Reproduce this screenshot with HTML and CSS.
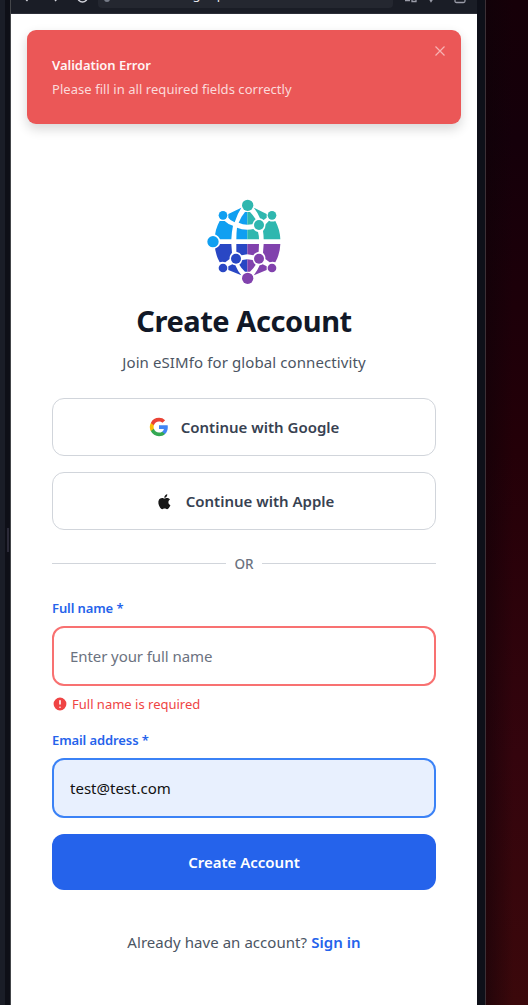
FILE: index.html
```html
<!DOCTYPE html>
<html lang="en">
<head>
<meta charset="utf-8">
<title>Create Account</title>
<link rel="stylesheet" href="styles.css">
</head>
<body>
<div class="desktop">
  <div class="rail"></div>
  <div class="gutter"><span class="grip"></span></div>
  <div class="browser">
    <header class="toolbar">
      <svg class="nav-icons" width="87" height="14" viewBox="0 0 87 14" fill="none" stroke="#d4d6dd" stroke-width="1.4"><path d="M16.500 1l-2-2M44 1l2-2"/><circle cx="71.500" cy="-3" r="5"/></svg>
      <div class="address"><svg width="12" height="8" viewBox="0 0 12 8"><circle cx="9" cy="-1" r="3" fill="#777c88"/></svg><span class="url">esimfo.com/signup</span></div>
      <svg class="tool-icons" width="84" height="14" viewBox="0 0 84 14" fill="none" stroke="#9a9ca8" stroke-width="1.300"><path d="M12 .5h5M19-2v3.500h4v-3.500M36-2l2 3.500 2-3M62-2v3q0 1.500 1.500 1.500h7Q72 2.500 72 1v-3"/></svg>
    </header>
    <main class="page">
      <section class="toast">
        <h2 class="toast-title">Validation Error</h2>
        <p class="toast-text">Please fill in all required fields correctly</p>
        <svg class="close" width="12" height="12" viewBox="0 0 12 12" fill="none" stroke="#f7b3b4" stroke-width="1.200"><path d="M1.500 1.500l9 9m0-9l-9 9"/></svg>
      </section>
      <div class="content">
        <svg class="logo" width="100" height="104" viewBox="0 0 300 312">
          <g fill="#109ff1">
            <path d="M68 93Q54 118 53 148H103Q104 125 108 107Q94 104 83 93Z"/>
            <path d="M94 72L133 53Q121 71 113 97Q100 92 94 83Z"/>
            <path d="M151 66H144Q132 80 125 98Q137 104 151 104Z"/>
            <path d="M120 113Q134 119 151 119V148H118Q118 129 120 113Z"/>
            <circle cx="78" cy="76" r="13"/>
          </g>
          <g fill="#2fb7af">
            <path d="M151 66H159Q169 76 176 88Q168 93 166 103L151 104Z"/>
            <path d="M151 119Q162 119 169 117Q175 124 183 126Q186 137 186 148H151Z"/>
            <path d="M170 53L209 72V83L200 90Q194 86 189 85Q181 66 170 53Z"/>
            <path d="M235 93Q249 119 250 148H200Q200 135 198 123Q206 116 206 103L216 92Q225 97 235 93Z"/>
            <circle cx="152" cy="46" r="17"/><circle cx="225" cy="76" r="13"/><circle cx="186" cy="105" r="15"/>
          </g>
          <g fill="#2947c4">
            <path d="M53 162H103L105 188Q96 198 98 207L85 217Q76 213 68 217Q54 192 53 162Z"/>
            <path d="M118 162H151V193L134 196Q129 187 118 185Z"/>
            <path d="M151 208V245H144Q133 235 127 224Q134 219 136 210Z"/>
            <path d="M94 229L106 223Q111 226 115 226Q122 243 133 256L94 240Z"/>
            <circle cx="78" cy="234" r="13"/><circle cx="117" cy="206" r="15"/>
          </g>
          <g fill="#8142ad">
            <path d="M250 162H200L198 188Q207 198 205 207L218 217Q227 213 235 217Q249 192 250 162Z"/>
            <path d="M186 162H151V193L169 196Q174 187 185 185Z"/>
            <path d="M151 208V245H159Q170 235 176 224Q169 219 167 210Z"/>
            <path d="M209 229L197 223Q192 226 188 226Q181 243 170 256L209 240Z"/>
            <circle cx="186" cy="206" r="15"/><circle cx="225" cy="234" r="13"/><circle cx="152" cy="265" r="17"/>
          </g>
          <circle cx="48" cy="155" r="19.500" fill="#109ff1" stroke="#fff" stroke-width="5"/>
        </svg>
        <h1 class="title"><span>Create Account</span></h1>
        <p class="subtitle">Join eSIMfo for global connectivity</p>
        <button class="social google"><svg width="20" height="20" viewBox="0 0 24 24"><path fill="#4285f4" d="M22.560 12.250c0-.78-.07-1.530-.2-2.250H12v4.260h5.920a5.060 5.060 0 0 1-2.200 3.320v2.770h3.570c2.080-1.920 3.270-4.740 3.270-8.100z"/><path fill="#34a853" d="M12 23c2.970 0 5.460-.98 7.280-2.660l-3.570-2.770c-.98.66-2.230 1.060-3.710 1.060-2.860 0-5.290-1.930-6.160-4.530H2.180v2.840A11 11 0 0 0 12 23z"/><path fill="#fbbc05" d="M5.840 14.090a6.600 6.600 0 0 1 0-4.180V7.070H2.180a11 11 0 0 0 0 9.860l3.660-2.840z"/><path fill="#ea4335" d="M12 5.380c1.620 0 3.060.56 4.210 1.640l3.150-3.150A10.560 10.560 0 0 0 12 1 11 11 0 0 0 2.180 7.070l3.660 2.840C6.710 7.310 9.140 5.380 12 5.380z"/></svg><span>Continue with Google</span></button>
        <button class="social apple"><svg width="20" height="20" viewBox="-2 -2.500 27 27"><path fill="#171717" d="M18.710 19.500c-.83 1.240-1.710 2.450-3.050 2.470-1.340.03-1.770-.79-3.290-.79-1.530 0-2 .77-3.270.82-1.310.05-2.300-1.320-3.140-2.530C4.250 17 2.940 12.450 4.700 9.390c.87-1.520 2.430-2.480 4.120-2.510 1.280-.02 2.500.87 3.290.87.78 0 2.260-1.070 3.810-.91.65.03 2.470.26 3.640 1.980-.09.06-2.170 1.280-2.150 3.810.03 3.020 2.650 4.030 2.680 4.040-.03.07-.42 1.440-1.380 2.830M13 3.500c.73-.83 1.940-1.460 2.940-1.500.13 1.170-.34 2.350-1.040 3.190-.69.85-1.830 1.510-2.950 1.420-.15-1.150.41-2.350 1.050-3.110z"/></svg><span>Continue with Apple</span></button>
        <div class="divider"><span>OR</span></div>
        <label class="label name-label" for="name">Full name *</label>
        <input class="field invalid" id="name" placeholder="Enter your full name">
        <p class="error"><svg width="16" height="16" viewBox="0 0 20 20" fill="#ef4444"><path fill-rule="evenodd" d="M18 10a8 8 0 1 1-16 0 8 8 0 0 1 16 0zm-7 4a1 1 0 1 1-2 0 1 1 0 0 1 2 0zm-1-9a1 1 0 0 0-1 1v4a1 1 0 1 0 2 0V6a1 1 0 0 0-1-1z"/></svg><span>Full name is required</span></p>
        <label class="label email-label" for="email">Email address *</label>
        <input class="field filled" id="email" value="test@test.com">
        <button class="submit"><span>Create Account</span></button>
        <p class="signin"><span class="question">Already have an account?</span><a class="link">Sign in</a></p>
      </div>
    </main>
  </div>
  <div class="edge"></div>
  <div class="wallpaper"></div>
</div>
</body>
</html>
```

FILE: styles.css
```css
* { box-sizing: border-box; }
body, h1, h2, p { margin: 0; }
body, button, input { font-family: "Noto Sans", "Open Sans", sans-serif; }
.desktop { display: flex; width: 528px; height: 1005px; overflow: hidden; background: #0e0f17; }
.rail { width: 5px; background: #1a1d27; }
.gutter { display: flex; align-items: center; width: 6px; padding: 75px 0 0 2px; border-right: 1px solid #44464a; }
.grip { width: 2px; height: 24px; background: #2b2a38; }
.browser { display: flex; flex-direction: column; width: 466px; }
.toolbar { display: flex; height: 14px; flex: none; overflow: hidden; background: #1a1d26; border-bottom: 1px solid #2c2e38; }
.nav-icons, .tool-icons { flex: none; }
.address { display: flex; flex: 1; height: 8px; overflow: hidden; background: #242730; border-radius: 0 0 4px 4px; }
.url { margin: -15px 0 0 -3px; color: #e5e6ea; font-size: 13px; line-height: 18px; }
.page { flex: 1; padding: 16px 16px 0; background: #fff; }
.toast { position: relative; height: 94px; padding: 25px; border-radius: 9px; background: #eb5757; box-shadow: 0 5px 12px rgba(0,0,0,.16); }
.toast-title { color: #fff5f5; font-size: 13px; font-weight: 600; line-height: 20px; letter-spacing: -.03px; }
.toast-text { margin-top: 4px; color: #fbdada; font-size: 13px; line-height: 20px; letter-spacing: .05px; white-space: nowrap; }
.close { position: absolute; top: 15px; right: 15px; }
.content { display: flex; flex-direction: column; width: 384px; margin: 66px 0 0 25px; }
.logo { margin-left: 145px; flex: none; }
.title { margin-top: 7px; color: #111827; font-size: 29px; font-weight: 700; line-height: 40px; letter-spacing: -.43px; text-align: center; }
.subtitle { margin-top: 9px; color: #4b5563; font-size: 15px; line-height: 24px; letter-spacing: .1px; text-align: center; white-space: nowrap; }
.social { display: flex; align-items: center; justify-content: center; gap: 12px; height: 58px; border: 1px solid #d1d5db; border-radius: 12px; background: #fff; color: #374151; font-size: 15px; font-weight: 600; }
.google { margin-top: 24px; }
.apple { margin-top: 16px; }
.divider { display: flex; align-items: center; gap: 8px; height: 20px; margin-top: 23px; color: #6b7280; font-size: 13.500px; font-weight: 500; }
.divider span { padding-top: 2px; }
.divider::before, .divider::after { content: ""; flex: 1; height: 1px; background: #d1d5db; }
.label { color: #2563eb; font-size: 13px; font-weight: 600; line-height: 20px; letter-spacing: -.1px; }
.name-label { margin-top: 25px; }
.field { width: 100%; height: 60px; margin: 8px 0 0; padding: 0 16px; border: 2px solid #f87171; border-radius: 12px; outline: 0; background: #fff; color: #111; font-size: 15px; }
.field::placeholder { color: #6b7280; letter-spacing: -.08px; opacity: 1; }
.filled { border-color: #3b82f6; background: #e8f0fe; }
.error { display: flex; align-items: center; gap: 4px; height: 20px; margin-top: 8px; color: #ef4444; font-size: 13px; }
.email-label { margin-top: 16px; }
.submit { height: 56px; margin-top: 16px; border: 0; border-radius: 12px; background: #2563eb; color: #fff; font-size: 15px; font-weight: 600; }
.signin { display: flex; justify-content: center; gap: 4px; margin-top: 40px; color: #4b5563; font-size: 15px; line-height: 24px; letter-spacing: .05px; }
.link { color: #2563eb; font-weight: 600; }
.edge { width: 9px; border-right: 1px solid #3c3036; background: #0e1019; }
.wallpaper { flex: 1; background: linear-gradient(90deg, rgba(12,2,8,.5), transparent 65%), linear-gradient(#160008, #15000a 14%, #240008 45%, #34040d 75%, #3b080b); }
```
